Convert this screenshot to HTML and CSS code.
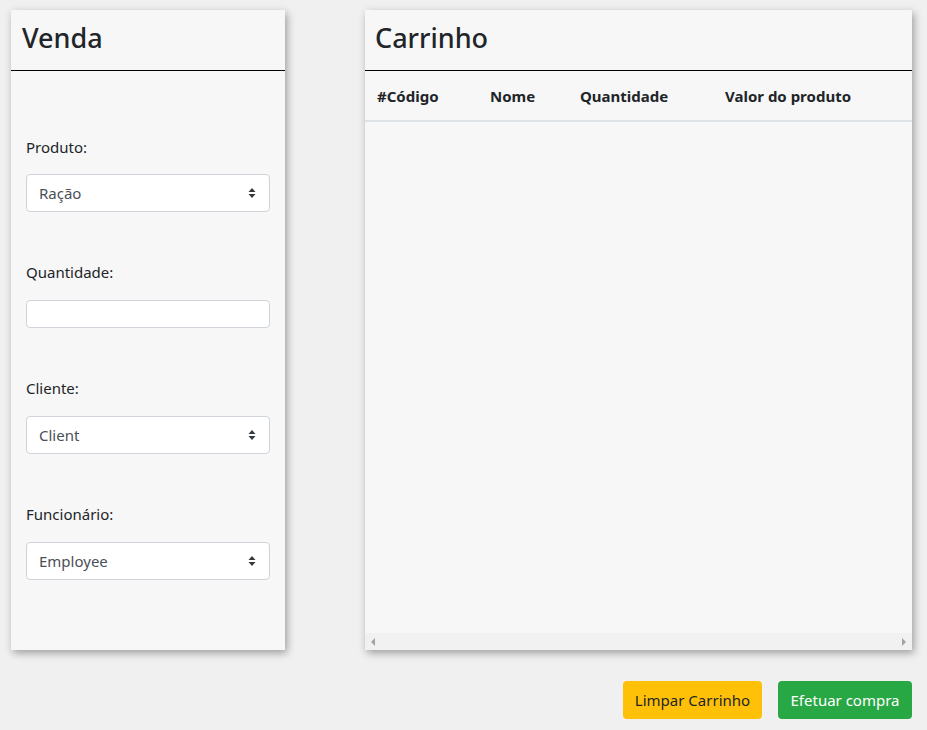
FILE: index.html
```html
<!DOCTYPE html>
<html lang="pt">
<head>
<meta charset="utf-8">
<title>Venda</title>
<link rel="stylesheet" href="styles.css">
</head>
<body>
<div class="page">
  <div class="cards">
    <section class="card card-venda">
      <header class="card-header"><h2>Venda</h2></header>
      <div class="form">
        <div class="group">
          <label>Produto:</label>
          <div class="select"><span>Ração</span><svg class="caret" viewBox="0 0 8 12" width="8" height="12"><path d="M4 1 L7.5 5 H0.5 Z M4 11 L7.5 7 H0.5 Z" fill="#343a40"/></svg></div>
        </div>
        <div class="group">
          <label>Quantidade:</label>
          <div class="input"></div>
        </div>
        <div class="group">
          <label>Cliente:</label>
          <div class="select"><span>Client</span><svg class="caret" viewBox="0 0 8 12" width="8" height="12"><path d="M4 1 L7.5 5 H0.5 Z M4 11 L7.5 7 H0.5 Z" fill="#343a40"/></svg></div>
        </div>
        <div class="group">
          <label>Funcionário:</label>
          <div class="select"><span>Employee</span><svg class="caret" viewBox="0 0 8 12" width="8" height="12"><path d="M4 1 L7.5 5 H0.5 Z M4 11 L7.5 7 H0.5 Z" fill="#343a40"/></svg></div>
        </div>
      </div>
    </section>
    <section class="card card-cart">
      <header class="card-header"><h2>Carrinho</h2></header>
      <div class="table-wrap">
        <table class="table">
          <thead>
            <tr>
              <th class="c1">#Código</th>
              <th class="c2">Nome</th>
              <th class="c3">Quantidade</th>
              <th class="c4">Valor do produto</th>
            </tr>
          </thead>
        </table>
      </div>
      <div class="hscroll">
        <svg viewBox="0 0 6 8" width="6" height="8"><path d="M5 0 V8 L1 4 Z" fill="#a3a3a3"/></svg>
        <svg viewBox="0 0 6 8" width="6" height="8"><path d="M1 0 V8 L5 4 Z" fill="#a3a3a3"/></svg>
      </div>
    </section>
  </div>
  <div class="actions">
    <button class="btn btn-warning">Limpar Carrinho</button>
    <button class="btn btn-success">Efetuar compra</button>
  </div>
</div>
</body>
</html>
```

FILE: styles.css
```css
* { box-sizing: border-box; }
html, body { margin: 0; padding: 0; }
body {
  background: #f0f0f0;
  font-family: "Noto Sans", "Open Sans", sans-serif;
  font-size: 15px;
  color: #212529;
}
.page {
  width: 927px;
  height: 730px;
  padding: 10px 15px 0 11px;
}
.cards {
  display: flex;
  gap: 80px;
  height: 640px;
}
.card {
  background: #f7f7f7;
  box-shadow: 2px 3px 8px rgba(0,0,0,0.35);
  display: flex;
  flex-direction: column;
}
.card-venda { width: 274px; }
.card-cart { width: 547px; overflow: hidden; }
.card-header {
  height: 61px;
  border-bottom: 1px solid #000;
  display: flex;
  align-items: center;
  padding-left: 11px;
}
.card-cart .card-header { padding-left: 10px; }
.card-header h2 {
  margin: 0;
  font-size: 27px;
  font-weight: 500;
  line-height: 1;
  padding-bottom: 6px;
  color: #212529;
}
.form {
  padding: 64px 15px 0 15px;
  display: flex;
  flex-direction: column;
  gap: 48px;
}
.group label {
  display: block;
  line-height: 24px;
  margin-bottom: 16px;
}
.group:first-child label { margin-bottom: 15px; }
.select {
  height: 38px;
  background: #fff;
  border: 1px solid #ced4da;
  border-radius: 4px;
  display: flex;
  align-items: center;
  justify-content: space-between;
  padding: 0 13px 0 12px;
  color: #495057;
}
.input {
  height: 28px;
  background: #fff;
  border: 1px solid #ced4da;
  border-radius: 4px;
}
.table-wrap {
  flex: 1;
  overflow: hidden;
}
.table {
  border-collapse: collapse;
  width: 560px;
}
.table th {
  text-align: left;
  font-weight: 700;
  font-size: 15px;
  padding: 13px 12px 12px 12px;
  line-height: 24px;
  border-bottom: 2px solid #dee2e6;
  white-space: nowrap;
}
.c1 { width: 113px; }
.c2 { width: 90px; }
.c3 { width: 145px; }
.hscroll {
  height: 17px;
  background: #f1f1f1;
  display: flex;
  align-items: center;
  justify-content: space-between;
  padding: 0 5px 0 5px;
}
.actions {
  display: flex;
  justify-content: flex-end;
  gap: 16px;
  margin-top: 31px;
}
.btn {
  height: 38px;
  border: 1px solid transparent;
  border-radius: 4px;
  font-family: inherit;
  font-size: 15px;
  padding: 0;
  white-space: nowrap;
  text-align: center;
}
.btn-warning { background: #ffc107; color: #212529; width: 139px; }
.btn-success { background: #28a745; color: #fff; width: 134px; }
```
